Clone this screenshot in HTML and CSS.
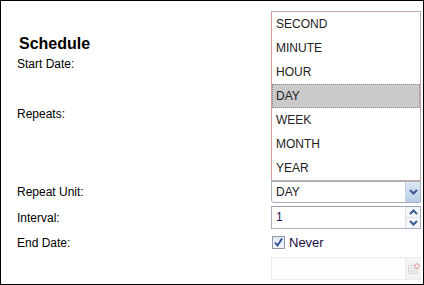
FILE: index.html
```html
<!DOCTYPE html>
<html lang="en">

<head>
    <meta charset="UTF-8">
    <title>Schedule</title>
    <link rel="stylesheet" href="styles.css">
</head>

<body>
    <div class="frame">
        <h2 class="title">Schedule</h2>
        <div class="row row_start">
            <div class="label">Start Date:</div>
        </div>
        <div class="row row_repeats">
            <div class="label">Repeats:</div>
        </div>
        <div class="row row_unit">
            <div class="label">Repeat Unit:</div>
            <div class="select">
                <span class="select_text">DAY</span>
                <span class="select_btn">
                    <svg width="9" height="6" viewBox="0 0 9 6"><path d="M1 1 L4.5 4.5 L8 1" fill="none" stroke="#3a5a8c" stroke-width="2"/></svg>
                </span>
            </div>
        </div>
        <div class="row row_interval">
            <div class="label">Interval:</div>
            <div class="spinner">
                <span class="spinner_text">1</span>
                <span class="spinner_btns">
                    <span class="spin">
                        <svg width="9" height="6" viewBox="0 0 9 6"><path d="M1 5 L4.5 1.5 L8 5" fill="none" stroke="#3a5a8c" stroke-width="2"/></svg>
                    </span>
                    <span class="spin">
                        <svg width="9" height="6" viewBox="0 0 9 6"><path d="M1 1 L4.5 4.5 L8 1" fill="none" stroke="#3a5a8c" stroke-width="2"/></svg>
                    </span>
                </span>
            </div>
        </div>
        <div class="row row_end">
            <div class="label">End Date:</div>
            <div class="check_wrap">
                <span class="checkbox">
                    <svg width="11" height="11" viewBox="0 0 11 11"><path d="M2 5.5 L4.5 8.5 L9 1.5" fill="none" stroke="#2b4a9a" stroke-width="1.8"/></svg>
                </span>
                <span class="check_label">Never</span>
            </div>
        </div>
        <div class="row row_date">
            <div class="label"></div>
            <div class="date">
                <span class="date_field"></span>
                <span class="date_btn">
                    <svg width="12" height="11" viewBox="0 0 12 11">
                        <rect x="0.5" y="2.5" width="9" height="8" fill="#f4f4f4" stroke="#d8d8d8"/>
                        <path d="M3.5 3 V10 M6.5 3 V10 M1 5.5 H9 M1 8 H9" stroke="#e2e2e2"/>
                        <circle cx="9" cy="3" r="2.2" fill="#fff" stroke="#e08a8a"/>
                    </svg>
                </span>
            </div>
        </div>

        <ul class="menu">
            <li>SECOND</li>
            <li>MINUTE</li>
            <li>HOUR</li>
            <li class="active">DAY</li>
            <li>WEEK</li>
            <li>MONTH</li>
            <li>YEAR</li>
        </ul>
    </div>
</body>

</html>
```

FILE: styles.css
```css
* {
    margin: 0;
    padding: 0;
    box-sizing: border-box;
}

body {
    font-family: "Liberation Sans", Arial, sans-serif;
    font-size: 12px;
    color: #000;
    background-color: #fff;
}

.frame {
    position: relative;
    width: 424px;
    height: 285px;
    border: 1px solid #000;
    padding: 34px 0 0 16px;
}

.title {
    font-size: 16px;
    line-height: 18px;
    font-weight: bold;
    height: 18px;
    padding-left: 2px;
}

.row {
    display: flex;
    align-items: center;
}

.label {
    width: 254px;
    flex: none;
}

.row_start {
    margin-top: 1px;
    height: 20px;
}

.row_repeats {
    height: 80px;
}

.row_unit {
    margin-top: 26px;
    height: 23px;
}

.row_interval {
    margin-top: 3px;
    height: 23px;
}

.row_end {
    margin-top: 1px;
    height: 25px;
}

.row_date {
    margin-top: 2px;
    height: 23px;
}

.select {
    display: flex;
    width: 150px;
    height: 22px;
    border: 1px solid #a9b0bc;
    border-radius: 0 0 0 3px;
    background-color: #fff;
}

.select_text,
.spinner_text {
    flex: 1;
    line-height: 20px;
    padding-left: 4px;
    color: #1c1c1c;
}

.spinner_text {
    color: #1a1450;
}

.select_btn {
    width: 15px;
    display: flex;
    align-items: center;
    justify-content: center;
    background: linear-gradient(#dce8f6, #b8cde6);
    border-left: 1px solid #c4d2e4;
}

.spinner {
    display: flex;
    width: 150px;
    height: 23px;
    border: 1px solid #a9b0c4;
    border-top-color: #9aa3b8;
    background-color: #fff;
}

.spinner_btns {
    width: 15px;
    display: flex;
    flex-direction: column;
    border-left: 1px solid #dde2ea;
}

.spin {
    flex: 1;
    display: flex;
    align-items: center;
    justify-content: center;
    background-color: #f3f5f9;
}

.spin + .spin {
    border-top: 1px solid #dde2ea;
}

.check_wrap {
    display: flex;
    align-items: center;
    padding-left: 1px;
}

.checkbox {
    width: 13px;
    height: 13px;
    border: 1px solid #8e98aa;
    background: linear-gradient(#e2e6ee, #f4f6f9);
    display: flex;
    align-items: center;
    justify-content: center;
}

.check_label {
    margin-left: 4px;
    font-size: 13px;
    color: #140c40;
}

.date {
    display: flex;
    width: 150px;
    height: 23px;
}

.date_field {
    width: 135px;
    border: 1px solid #ececec;
    background-color: #fefefe;
}

.date_btn {
    width: 15px;
    display: flex;
    align-items: center;
    justify-content: center;
    background-color: #f4f4f4;
    border-top: 1px solid #ececec;
    border-bottom: 1px solid #ececec;
}

.menu {
    position: absolute;
    left: 270px;
    top: 10px;
    width: 150px;
    height: 170px;
    list-style: none;
    background-color: #fff;
    border: 1px solid #c4a9a9;
    border-left-color: #d29b9b;
}

.menu li {
    height: 24px;
    line-height: 24px;
    padding-left: 4px;
    color: #222;
}

.menu .active {
    background-color: #cacaca;
    border: 1px dotted #8a8a8a;
    line-height: 22px;
    padding-left: 3px;
}
```
